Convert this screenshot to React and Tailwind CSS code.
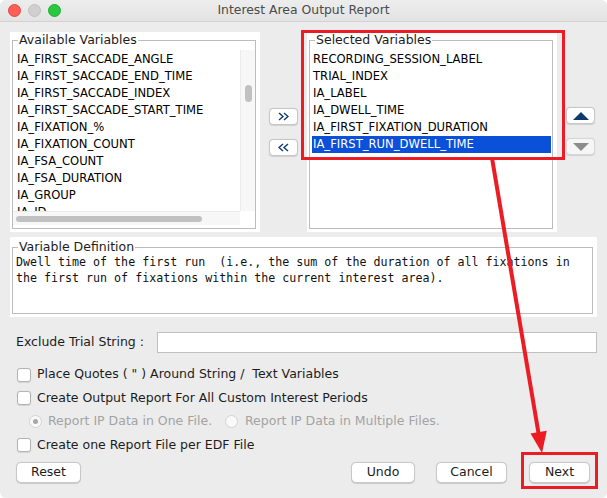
import React from "react";

const available = [
  "IA_FIRST_SACCADE_ANGLE",
  "IA_FIRST_SACCADE_END_TIME",
  "IA_FIRST_SACCADE_INDEX",
  "IA_FIRST_SACCADE_START_TIME",
  "IA_FIXATION_%",
  "IA_FIXATION_COUNT",
  "IA_FSA_COUNT",
  "IA_FSA_DURATION",
  "IA_GROUP",
  "IA_ID",
];

const selected = [
  "RECORDING_SESSION_LABEL",
  "TRIAL_INDEX",
  "IA_LABEL",
  "IA_DWELL_TIME",
  "IA_FIRST_FIXATION_DURATION",
  "IA_FIRST_RUN_DWELL_TIME",
];

function Legend({ children }) {
  return (
    <legend className="ml-[5px] px-[1px] text-[12.5px] leading-[14px] text-[#1c1c1c]">
      {children}
    </legend>
  );
}

function SmallButton({ children, disabled }) {
  return (
    <button
      type="button"
      className={`w-[29px] h-[17px] rounded-[4px] border flex items-center justify-center shadow-[0_0.5px_1px_rgba(0,0,0,0.12)] ${
        disabled ? "bg-[#f6f6f6] border-[#d6d6d6]" : "bg-white border-[#c6c6c6]"
      }`}
    >
      {children}
    </button>
  );
}

function Chevrons({ dir }) {
  const pts = dir === "right" ? ["1,1 5,4.5 1,8", "6,1 10,4.5 6,8"] : ["5,1 1,4.5 5,8", "10,1 6,4.5 10,8"];
  return (
    <svg width="11" height="9" viewBox="0 0 11 9">
      {pts.map((p) => (
        <polyline key={p} points={p} fill="none" stroke="#0d3c70" strokeWidth="1.4" />
      ))}
    </svg>
  );
}

function Check({ label }) {
  return (
    <label className="flex items-center h-[23.5px] pl-[17px] gap-[6px] text-[12.5px] text-[#1c1c1c]">
      <span className="w-[14px] h-[14px] rounded-[3px] border border-[#b3b3b3] bg-white shadow-[0_0.5px_1px_rgba(0,0,0,0.1)]" />
      <span className="whitespace-pre">{label}</span>
    </label>
  );
}

function PushButton({ children, className = "" }) {
  return (
    <button
      type="button"
      className={`h-[21px] rounded-[5px] border border-[#c8c8c8] bg-white text-[12.5px] text-[#1c1c1c] shadow-[0_0.5px_1px_rgba(0,0,0,0.15)] ${className}`}
    >
      {children}
    </button>
  );
}

export default function App() {
  return (
    <div className="relative w-[607px] h-[498px] overflow-hidden rounded-[6px] bg-[#ececec] font-['DejaVu_Sans',sans-serif]">
      {/* title bar */}
      <div className="grid grid-cols-[1fr_auto_1fr] items-center h-[22px] border-b border-[#d2d2d2] bg-gradient-to-b from-[#ededed] to-[#e3e3e3]">
        <div className="flex items-center gap-[7px] pl-[8px]">
          <span className="w-[13px] h-[13px] rounded-full bg-[#fd5f57] border border-[#e2463f]" />
          <span className="w-[13px] h-[13px] rounded-full bg-[#d0d0d0] border border-[#bfbfbf]" />
          <span className="w-[13px] h-[13px] rounded-full bg-[#2ac840] border border-[#1eae2c]" />
        </div>
        <div className="text-[12.4px] text-[#4b4b4b]">Interest Area Output Report</div>
        <div />
      </div>

      <div className="pl-[10px] pr-[3px] pt-[10px]">
        {/* lists */}
        <div className="flex h-[200px]">
          <div className="w-[250px] shrink-0 bg-white pt-[1px] pl-[2px] pr-[4px] pb-[3px]">
            <fieldset className="h-full min-w-0 border border-[#bcbcbc] overflow-hidden">
              <Legend>Available Variables</Legend>
              <div className="flex h-[161px] mt-[3px]">
                <div className="flex-1 overflow-hidden pl-[4px] pt-[1px] text-[11.6px] leading-[17px] text-black">
                  {available.map((v) => (
                    <div key={v} className="whitespace-nowrap">{v}</div>
                  ))}
                </div>
                <div className="w-[15px] bg-[#f7f7f7] border-l border-[#ebebeb] flex justify-center pt-[35px]">
                  <div className="w-[7px] h-[17px] rounded-full bg-[#c1c1c1]" />
                </div>
              </div>
              <div className="flex h-[14px]">
                <div className="flex-1 bg-[#f7f7f7] border-t border-[#ebebeb] pl-[3px] pt-[4px]">
                  <div className="w-[186px] h-[6px] rounded-full bg-[#c1c1c1]" />
                </div>
                <div className="w-[15px] bg-white" />
              </div>
            </fieldset>
          </div>

          <div className="w-[47px] shrink-0 flex flex-col items-center justify-center gap-[14px]">
            <SmallButton>
              <Chevrons dir="right" />
            </SmallButton>
            <SmallButton>
              <Chevrons dir="left" />
            </SmallButton>
          </div>

          <div className="w-[250px] shrink-0 bg-white pt-[1px] pl-[2px] pr-[4px] pb-[3px]">
            <fieldset className="h-full min-w-0 border border-[#bcbcbc] overflow-hidden">
              <Legend>Selected Variables</Legend>
              <div className="mt-[4px] pl-[2px] pr-[1px] text-[11.6px] leading-[17px] text-black">
                {selected.map((v, i) => (
                  <div
                    key={v}
                    className={`whitespace-nowrap pl-[1px] ${
                      i === selected.length - 1 ? "bg-[#0a50d8] text-white" : ""
                    }`}
                  >
                    {v}
                  </div>
                ))}
              </div>
            </fieldset>
          </div>

          <div className="w-[47px] shrink-0 flex flex-col items-center justify-center gap-[14px] pb-[2px]">
            <SmallButton>
              <svg width="16" height="8" viewBox="0 0 16 8">
                <polygon points="8,0 16,8 0,8" fill="#0c3a6c" />
              </svg>
            </SmallButton>
            <SmallButton disabled>
              <svg width="16" height="8" viewBox="0 0 16 8">
                <polygon points="0,0 16,0 8,8" fill="#8d8d8d" />
              </svg>
            </SmallButton>
          </div>
        </div>

        {/* definition */}
        <div className="mt-[5px] w-[587px] h-[80px] bg-white pt-[3px] pl-[2px] pr-[4px] pb-[3px]">
          <fieldset className="h-full min-w-0 border border-[#bcbcbc]">
            <Legend>Variable Definition</Legend>
            <div className="pl-[3px] font-['DejaVu_Sans_Mono',monospace] text-[11.65px] leading-[16px] text-[#111] whitespace-pre">
              {"Dwell time of the first run  (i.e., the sum of the duration of all fixations in\nthe first run of fixations within the current interest area)."}
            </div>
          </fieldset>
        </div>

        {/* exclude */}
        <div className="mt-[15px] w-[587px] flex items-center h-[21px]">
          <span className="pl-[6px] text-[12.5px] text-[#1c1c1c] whitespace-pre">Exclude Trial String :</span>
          <div className="ml-auto w-[440px] h-[21px] bg-white border border-[#c0c0c0]" />
        </div>

        {/* options */}
        <div className="mt-[10px] -ml-[10px]">
          <Check label={'Place Quotes ( " ) Around String /  Text Variables'} />
          <Check label="Create Output Report For All Custom Interest Periods" />
          <div className="flex items-center h-[23.5px] pl-[29px] text-[12.5px] text-[#a3a3a3]">
            <div className="w-[196px] flex items-center gap-[6px]">
              <span className="w-[13px] h-[13px] rounded-full border border-[#d3d3d3] bg-[#f9f9f9] flex items-center justify-center">
                <span className="w-[5px] h-[5px] rounded-full bg-[#a8a8a8]" />
              </span>
              <span>Report IP Data in One File.</span>
            </div>
            <div className="flex items-center gap-[7px]">
              <span className="w-[13px] h-[13px] rounded-full border border-[#d3d3d3] bg-[#f9f9f9]" />
              <span>Report IP Data in Multiple Files.</span>
            </div>
          </div>
          <Check label="Create one Report File per EDF File" />
        </div>

        {/* buttons */}
        <div className="mt-[5px] w-[580px] flex items-center">
          <PushButton className="ml-[6px] w-[65px]">Reset</PushButton>
          <PushButton className="ml-auto w-[64px]">Undo</PushButton>
          <PushButton className="ml-[21px] w-[71px]">Cancel</PushButton>
          <PushButton className="ml-[22px] w-[61px]">Next</PushButton>
        </div>
      </div>

      {/* annotations */}
      <div className="absolute left-[301px] top-[30px] w-[264px] h-[130px] border-[3px] border-[#ec1c24]" />
      <div className="absolute left-[521px] top-[452px] w-[77px] h-[37px] border-[3px] border-[#ec1c24]" />
      <svg className="absolute left-0 top-0 pointer-events-none" width="607" height="498" viewBox="0 0 607 498">
        <line x1="492" y1="158" x2="539" y2="436" stroke="#ec1c24" strokeWidth="4" />
        <polygon points="542,453 530.5,433.5 546.8,430.8" fill="#ec1c24" />
      </svg>
    </div>
  );
}
